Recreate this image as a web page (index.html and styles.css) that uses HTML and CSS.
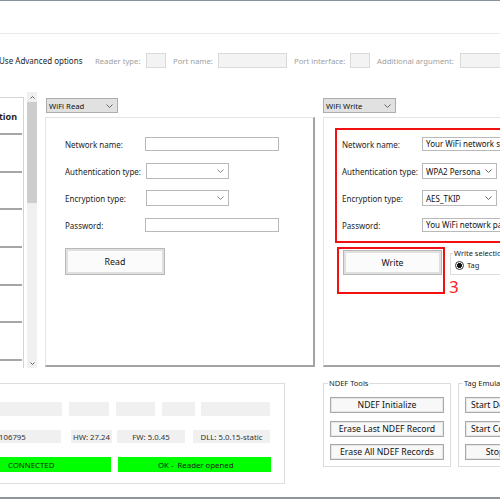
FILE: index.html
```html
<!DOCTYPE html>
<html>
    <head>
        <title>NFC Reader - WiFi</title>
        <meta charset="utf-8" />
        <link rel="stylesheet" href="styles.css">
    </head>
    <body>
        <div class="window">
            <div class="caption"></div>

            <div class="options">
                <span class="opt-main">Use Advanced options</span>
                <span class="opt-label w51">Reader type:</span><span class="opt-box w20"></span>
                <span class="opt-label w45">Port name:</span><span class="opt-box w69"></span>
                <span class="opt-label w56">Port interface:</span><span class="opt-box w20"></span>
                <span class="opt-label w83">Additional argument:</span><span class="opt-box w60"></span>
            </div>

            <div class="main">
                <div class="list">
                    <div class="list-box">
                        <div class="list-head"><span>Function</span></div>
                        <div class="list-row"></div>
                        <div class="list-row"></div>
                        <div class="list-row"></div>
                        <div class="list-row"></div>
                        <div class="list-row"></div>
                        <div class="list-row"></div>
                        <div class="list-row"></div>
                    </div>
                    <div class="scroll">
                        <div class="arrow"><svg width="5" height="3" viewBox="0 0 5 3"><path d="M0.5 2.5 L2.5 0.5 L4.5 2.5" fill="none" stroke="#606060"/></svg></div>
                        <div class="thumb"></div>
                        <div class="track"></div>
                        <div class="arrow"><svg width="5" height="3" viewBox="0 0 5 3"><path d="M0.5 0.5 L2.5 2.5 L4.5 0.5" fill="none" stroke="#606060"/></svg></div>
                    </div>
                </div>

                <div class="col read-col">
                    <div class="dd">WiFi Read <svg width="7" height="4" viewBox="0 0 7 4"><path d="M0.5 0.5 L3.5 3.5 L6.5 0.5" fill="none" stroke="#666"/></svg></div>
                    <div class="panel read-panel">
                        <div class="form">
                            <span>Network name:</span>
                            <div class="textbox w134"></div>
                            <span>Authentication type:</span>
                            <div class="select w83"><span></span><svg width="7" height="4" viewBox="0 0 7 4"><path d="M0.5 0.5 L3.5 3.5 L6.5 0.5" fill="none" stroke="#888"/></svg></div>
                            <span>Encryption type:</span>
                            <div class="select w83"><span></span><svg width="7" height="4" viewBox="0 0 7 4"><path d="M0.5 0.5 L3.5 3.5 L6.5 0.5" fill="none" stroke="#888"/></svg></div>
                            <span>Password:</span>
                            <div class="textbox w134"></div>
                        </div>
                        <div class="btn big-btn">Read</div>
                    </div>
                </div>

                <div class="col write-col">
                    <div class="dd">WiFi Write <svg width="7" height="4" viewBox="0 0 7 4"><path d="M0.5 0.5 L3.5 3.5 L6.5 0.5" fill="none" stroke="#666"/></svg></div>
                    <div class="panel write-panel">
                        <div class="redbox form">
                            <span>Network name:</span>
                            <div class="textbox w100">Your WiFi network ssid</div>
                            <span>Authentication type:</span>
                            <div class="select w75"><span>WPA2 Persona</span><svg width="7" height="4" viewBox="0 0 7 4"><path d="M0.5 0.5 L3.5 3.5 L6.5 0.5" fill="none" stroke="#666"/></svg></div>
                            <span>Encryption type:</span>
                            <div class="select w75"><span>AES_TKIP</span><svg width="7" height="4" viewBox="0 0 7 4"><path d="M0.5 0.5 L3.5 3.5 L6.5 0.5" fill="none" stroke="#666"/></svg></div>
                            <span>Password:</span>
                            <div class="textbox w100">You WiFi netowrk password</div>
                        </div>
                        <div class="wrow">
                            <div class="redbtn"><div class="btn write-btn">Write</div></div>
                            <div class="wsel">
                                <fieldset class="group sel-group">
                                    <legend>Write selection</legend>
                                    <div class="radio-row"><span class="radio"></span>Tag</div>
                                </fieldset>
                                <div class="mark">3</div>
                            </div>
                        </div>
                    </div>
                </div>
            </div>

            <div class="bottom">
                <div class="status">
                    <div class="srow r1">
                        <div class="sbox w62"></div>
                        <div class="sbox w40 ml7"></div>
                        <div class="sbox w39 ml7"></div>
                        <div class="sbox w33 ml7"></div>
                        <div class="sbox w69 ml6"></div>
                    </div>
                    <div class="srow r2">
                        <div class="sbox w62 sn">106795</div>
                        <div class="sbox w41 ml10">HW: 27.24</div>
                        <div class="sbox w68 ml5">FW: 5.0.45</div>
                        <div class="sbox w77 ml8">DLL: 5.0.15-static</div>
                    </div>
                    <div class="srow r3">
                        <div class="sbox ok w111 conn">CONNECTED</div>
                        <div class="sbox ok w153 ml7 opened">OK -&nbsp; Reader opened</div>
                    </div>
                </div>

                <fieldset class="group ndef">
                    <legend>NDEF Tools</legend>
                    <div class="tbtn">NDEF Initialize</div>
                    <div class="tbtn">Erase Last NDEF Record</div>
                    <div class="tbtn">Erase All NDEF Records</div>
                </fieldset>

                <fieldset class="group emu">
                    <legend>Tag Emulation</legend>
                    <div class="tbtn left">Start Dedicated Emulation</div>
                    <div class="tbtn left">Start Combined Emulation</div>
                    <div class="tbtn">Stop</div>
                </fieldset>
            </div>
        </div>
    </body>
</html>
```

FILE: styles.css
```css
* {
    box-sizing: border-box;
}
html, body {
    margin: 0;
}
body {
    width: 500px;
    height: 500px;
    overflow: hidden;
    background: #fff;
    font-family: "Noto Sans", "Open Sans", sans-serif;
    font-size: 8px;
    color: #1e1e1e;
}

.window {
    height: 499px;
    border-top: 1px solid #86929b;
    border-bottom: 2px solid #8e959b;
    overflow: hidden;
}
.caption {
    height: 33px;
    border-bottom: 1px solid #e9e9e9;
}

/* advanced options row */
.options {
    display: flex;
    align-items: center;
    height: 15px;
    margin-top: 19px;
    white-space: nowrap;
}
.opt-main {
    width: 96px;
    margin-left: -1px;
    flex-shrink: 0;
}
.opt-label {
    color: #a0a0a0;
    font-size: 7.7px;
    flex-shrink: 0;
}
.opt-box {
    height: 15px;
    background: #f3f3f3;
    border: 1px solid #dadada;
    margin-right: 7px;
    flex-shrink: 0;
}

.w20 { width: 20px; }
.w33 { width: 33px; }
.w39 { width: 39px; }
.w40 { width: 40px; }
.w41 { width: 41px; }
.w45 { width: 45px; }
.w51 { width: 51px; }
.w56 { width: 56px; }
.w60 { width: 60px; }
.w62 { width: 62px; }
.w68 { width: 68px; }
.w69 { width: 69px; }
.w75 { width: 75px; }
.w77 { width: 77px; }
.w83 { width: 83px; }
.w100 { width: 100px; }
.w111 { width: 111px; }
.w134 { width: 134px; }
.w153 { width: 153px; }
.ml5 { margin-left: 5px; }
.ml6 { margin-left: 6px; }
.ml7 { margin-left: 7px; }
.ml8 { margin-left: 8px; }
.ml10 { margin-left: 10px; }

/* main area */
.main {
    display: flex;
    height: 276px;
    margin-top: 24px;
}
.list {
    display: flex;
    flex-shrink: 0;
}
.list-box {
    width: 25px;
    height: 271px;
    margin-top: 5px;
    margin-left: -1px;
    border: 1px solid #d4d4d4;
    border-bottom: none;
    overflow: hidden;
}
.list-head {
    height: 35px;
    padding: 14px 6px 0 0;
    line-height: 10px;
    font-size: 9px;
    font-weight: bold;
    display: flex;
    justify-content: flex-end;
    white-space: nowrap;
}
.list-row {
    height: 37.7px;
    margin-right: 1px;
    border-top: 2px solid #a6a6a6;
}
.scroll {
    width: 10px;
    height: 276px;
    margin-left: 3px;
    background: #f0f0f0;
    display: flex;
    flex-direction: column;
}
.arrow {
    height: 10px;
    display: flex;
    align-items: center;
    justify-content: center;
}
.thumb {
    height: 101px;
    background: #cdcdcd;
}
.track {
    flex: 1;
}

.col {
    flex-shrink: 0;
    margin-left: 8px;
}
.read-col {
    width: 270px;
}
.write-col {
    width: 200px;
}
.dd {
    width: 72px;
    height: 15px;
    margin-top: 6px;
    padding: 0 4px 0 2px;
    background: #e1e1e1;
    border: 1px solid #adadad;
    display: flex;
    align-items: center;
    justify-content: space-between;
    font-size: 7.7px;
    color: #111;
}
.read-col .dd {
    margin-left: 1px;
}
.write-col .dd {
    width: 73px;
}
.panel {
    height: 250px;
    margin-top: 4px;
    border-top: 1px solid #e4e4e4;
    border-left: 1px solid #e4e4e4;
    border-right: 2px solid #a3a3a3;
    border-bottom: 2px solid #a3a3a3;
}
.read-panel {
    padding: 18px 0 0 19px;
}
.write-panel {
    padding: 10px 0 0 11px;
    border-right: none;
}

.form {
    display: grid;
    grid-template-columns: 80px auto;
    grid-auto-rows: 16px;
    row-gap: 11px;
    align-items: center;
    justify-items: start;
    white-space: nowrap;
}
.textbox {
    height: 14px;
    border: 1px solid #b9b9b9;
    padding: 0 3px;
    line-height: 12px;
    overflow: hidden;
    color: #111;
}
.select {
    height: 16px;
    margin-left: 1px;
    border: 1px solid #b9b9b9;
    padding: 0 4px 0 3px;
    display: flex;
    align-items: center;
    justify-content: space-between;
    color: #111;
}
.redbox .select {
    margin-left: 0;
}

.btn {
    display: flex;
    align-items: center;
    justify-content: center;
    background: #fbfbfb;
    border: 1px solid #b8b8b8;
    box-shadow: inset 0 0 0 2px #e0e0e0;
    font-size: 8.8px;
    color: #111;
}
.big-btn {
    width: 100px;
    height: 27px;
    margin-top: 15px;
}

.redbox {
    width: 200px;
    border: 2px solid #f21010;
    padding: 6px 0 8px 5px;
}
.wrow {
    display: flex;
    margin-top: 4px;
    margin-left: 2px;
}
.redbtn {
    border: 2px solid #f21010;
    padding: 1px 1px 0 4px;
}
.write-btn {
    width: 99px;
    height: 25px;
}
.wsel {
    margin-left: 5px;
    width: 70px;
}

/* group boxes */
.group {
    margin: 0;
    border: 1px solid #dcdcdc;
    min-width: 0;
}
.group legend {
    padding: 0 1px;
    margin-left: -2px;
    font-size: 7.5px;
    line-height: 8px;
    white-space: nowrap;
    color: #222;
}
.sel-group {
    height: 26px;
    margin-top: 2px;
    padding: 0 0 0 4px;
}
.radio-row {
    display: flex;
    align-items: center;
    margin-top: 3px;
    font-size: 7.5px;
}
.radio {
    width: 9px;
    height: 9px;
    margin-right: 3px;
    border: 1px solid #333;
    border-radius: 50%;
    background: radial-gradient(circle, #111 2.2px, #fff 2.8px);
}
.mark {
    margin-top: 4px;
    margin-left: -1px;
    font-size: 17px;
    line-height: 15px;
    color: #ff1a1a;
}

/* bottom area */
.bottom {
    display: flex;
    margin-top: 15px;
    align-items: flex-start;
}
.status {
    width: 286px;
    height: 101px;
    margin-left: -1px;
    flex-shrink: 0;
    border: 1px solid #dddddd;
    padding-top: 18px;
}
.srow {
    display: flex;
    white-space: nowrap;
}
.r1 {
    height: 14px;
}
.r2 {
    height: 13px;
    margin-top: 14px;
}
.r3 {
    height: 15px;
    margin-top: 14px;
}
.sbox {
    height: 100%;
    background: #f0f0f0;
    display: flex;
    align-items: center;
    justify-content: center;
    font-size: 7.8px;
    color: #333;
    overflow: hidden;
}
.sn {
    justify-content: flex-start;
    margin-left: -1px;
}
.ok {
    background: #00ff00;
    color: #1a1a1a;
    justify-content: flex-start;
}
.conn {
    padding-left: 8px;
}
.opened {
    padding-left: 40px;
}

.ndef {
    width: 128px;
    height: 88px;
    margin-left: 38px;
    margin-top: -4px;
    padding: 10px 0 0 6px;
    flex-shrink: 0;
}
.emu {
    width: 80px;
    height: 88px;
    margin-left: 7px;
    margin-top: -4px;
    padding: 10px 0 0 6px;
    flex-shrink: 0;
}
.tbtn {
    width: 114px;
    height: 16px;
    margin-bottom: 7.5px;
    background: #f8f8f8;
    border: 1px solid #a9a9a9;
    box-shadow: inset 0 0 0 1px #e6e6e6;
    display: flex;
    align-items: center;
    justify-content: center;
    font-size: 8.7px;
    color: #111;
    white-space: nowrap;
    overflow: hidden;
}
.emu .tbtn {
    width: 60px;
}
.emu .tbtn.left {
    justify-content: flex-start;
    padding-left: 5px;
}
```
